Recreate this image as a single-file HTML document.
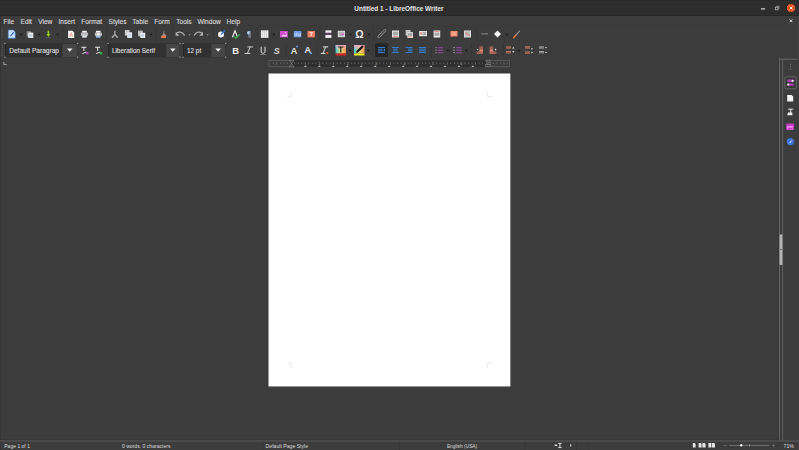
<!DOCTYPE html>
<html><head><meta charset="utf-8">
<style>
html,body{margin:0;padding:0;width:799px;height:450px;overflow:hidden;background:#3c3c3c;}
svg{display:block;position:absolute;left:0;top:0;}
text{font-family:"Liberation Sans",sans-serif;}
</style></head>
<body>
<svg width="799" height="450" viewBox="0 0 799 450">

<rect x="0" y="0" width="799" height="450" fill="#3c3c3c"/>
<rect x="0" y="16" width="1" height="434" fill="#353535"/>
<rect x="798" y="16" width="1" height="434" fill="#444444"/>
<rect x="0" y="0" width="799" height="16" fill="#2d2d2d"/>
<rect x="0" y="0" width="799" height="1" fill="#292929"/>
<rect x="0" y="15" width="799" height="1" fill="#272727"/>
<text x="354.3" y="10.7" font-size="7.5" font-weight="bold" fill="#e8e8e8" textLength="89.3" lengthAdjust="spacingAndGlyphs">Untitled 1 - LibreOffice Writer</text>
<rect x="761" y="8.1" width="4.1" height="1.5" fill="#b4b4b4"/>
<circle cx="791" cy="8" r="4.1" fill="#e95420"/>
<path d="M789.4 6.4 L792.6 9.6 M792.6 6.4 L789.4 9.6" stroke="#fff" stroke-width="0.9"/>
<rect x="775.3" y="7.2" width="2.7" height="2.6" fill="none" stroke="#bdbdbd" stroke-width="0.75"/>
<path d="M776.3 6.2 H779 V8.9" fill="none" stroke="#bdbdbd" stroke-width="0.6"/>
<path d="M789.6 19.4 L792.4 22.2 M792.4 19.4 L789.6 22.2" stroke="#dcdcdc" stroke-width="1"/>
<rect x="0" y="25.5" width="784" height="0.6" fill="#393939"/>
<g font-size="6.6" fill="#dcdcdc" stroke="#dcdcdc" stroke-width="0.1">
<text x="3.6" y="24.2">File</text>
<text x="20.6" y="24.2">Edit</text>
<text x="38.2" y="24.2">View</text>
<text x="58.5" y="24.2">Insert</text>
<text x="81.3" y="24.2">Format</text>
<text x="108.6" y="24.2">Styles</text>
<text x="132.3" y="24.2">Table</text>
<text x="154.3" y="24.2">Form</text>
<text x="176.2" y="24.2">Tools</text>
<text x="197.4" y="24.2">Window</text>
<text x="226.6" y="24.2">Help</text>
</g>
<rect x="1.6" y="29.2" width="1.2" height="0.8" fill="#5e5e5e"/>
<rect x="1.6" y="31.2" width="1.2" height="0.8" fill="#5e5e5e"/>
<rect x="1.6" y="33.2" width="1.2" height="0.8" fill="#5e5e5e"/>
<rect x="1.6" y="35.2" width="1.2" height="0.8" fill="#5e5e5e"/>
<rect x="1.6" y="37.2" width="1.2" height="0.8" fill="#5e5e5e"/>
<path d="M8.3 30 H13.3 L15.2 32 V38.2 H8.3 Z" fill="#cfe0f6" stroke="#3d86de" stroke-width="0.6"/>
<path d="M10.4 36.2 L13.8 32.2" stroke="#2566c0" stroke-width="1.1"/>
<path d="M19.5 33.800000000000004 H22.5 L21 35.5 Z" fill="#151515"/>
<rect x="26.6" y="31.2" width="4.5" height="5.5" fill="#8c8c8c"/>
<rect x="28.3" y="32.6" width="5" height="5.3" fill="#f0f0f0"/>
<rect x="29.2" y="34.3" width="3.2" height="2" fill="#b8c8e0"/>
<path d="M37.8 33.800000000000004 H40.8 L39.3 35.5 Z" fill="#151515"/>
<path d="M47.6 30.8 H49.2 V34 H50.3 L48.4 37 L46.5 34 H47.6 Z" fill="#98cf22"/>
<rect x="46" y="37.3" width="4.6" height="0.6" fill="#6a6a6a"/>
<path d="M55.9 33.800000000000004 H58.9 L57.4 35.5 Z" fill="#151515"/>
<rect x="62.5" y="27" width="0.8" height="15" fill="#353535"/>
<path d="M68.1 30.8 H72.4 L74.2 32.6 V38.1 H68.1 Z" fill="#f4f4f4"/>
<path d="M69.6 36.8 L71.2 32.6 L72.8 36.8 M70.1 35.4 H72.3" fill="none" stroke="#f0604c" stroke-width="0.45"/>
<rect x="82.2" y="30.8" width="4.6" height="2" fill="#f4f4f4"/>
<rect x="80.9" y="32.6" width="7.2" height="3.4" rx="1" fill="#b9b9b9"/>
<rect x="82.2" y="35.6" width="4.6" height="2" fill="#dde6f4"/>
<rect x="96" y="30.8" width="4.6" height="2" fill="#f4f4f4"/>
<rect x="94.8" y="32.6" width="7.2" height="3.4" rx="1" fill="#b9b9b9"/>
<rect x="96" y="35.6" width="4.6" height="2" fill="#9ec3ef"/>
<circle cx="98.3" cy="34.2" r="1.4" fill="#eeeeee"/>
<rect x="106" y="27" width="0.8" height="15" fill="#353535"/>
<path d="M114.9 30.8 V34.6 M114.9 34.6 L112.6 37 M114.9 34.6 L117.2 37" stroke="#a6a6a6" stroke-width="1.4" fill="none"/>
<circle cx="112.6" cy="37" r="0.9" fill="#a6a6a6"/><circle cx="117.2" cy="37" r="0.9" fill="#a6a6a6"/>
<rect x="124.9" y="30" width="4.6" height="5.6" fill="#c9c9c9"/>
<rect x="127.2" y="32.3" width="4.8" height="5.6" fill="#ececf4"/>
<rect x="128.2" y="33.8" width="2.8" height="2.4" fill="#c8d4ea"/>
<rect x="138" y="30.6" width="4.8" height="5.6" fill="#bdbdbd"/>
<rect x="140.3" y="32.8" width="4.9" height="5.1" fill="#f2f2f2"/>
<rect x="141.3" y="34.2" width="2.6" height="2.2" fill="#b7c7e4"/>
<path d="M149.7 33.800000000000004 H152.7 L151.2 35.5 Z" fill="#151515"/>
<rect x="155.7" y="27" width="0.8" height="15" fill="#353535"/>
<path d="M163.5 30.8 H164.3 V33.2 L166.2 35.6 L165.8 37.9 H161 L161.2 36.6 L163.5 33.2 Z" fill="#8e8e8e"/>
<path d="M161.9 35.4 H166.1 L165.8 37.9 H161 Z" fill="#f07a4a"/>
<rect x="172.6" y="27" width="0.8" height="15" fill="#353535"/>
<path d="M176.2 33.6 C178 31.4 182.6 31.4 184.6 35.6" stroke="#b0b0b0" stroke-width="1.2" fill="none"/>
<path d="M175.6 31.8 V35.8 H179.4 Z" fill="#b0b0b0"/>
<path d="M188.5 34.0 H190.7 L189.6 35.699999999999996 Z" fill="#8a8a8a"/>
<path d="M202.4 33.6 C200.6 31.4 196 31.4 194 35.6" stroke="#b0b0b0" stroke-width="1.2" fill="none"/>
<path d="M203 31.8 V35.8 H199.2 Z" fill="#b0b0b0"/>
<path d="M206.5 34.0 H208.7 L207.6 35.699999999999996 Z" fill="#8a8a8a"/>
<rect x="213" y="27" width="0.8" height="15" fill="#353535"/>
<circle cx="221" cy="34.5" r="3" fill="#f2f2f2"/>
<path d="M221 34.5 L225 30.4" stroke="#2f7ae0" stroke-width="1.3"/>
<path d="M223.2 36.8 L224.6 38" stroke="#777" stroke-width="0.6"/>
<path d="M232.4 37.2 L235 30.8 L237.6 37.2" stroke="#ececec" stroke-width="1.2" fill="none"/>
<path d="M234 36.2 L235.9 38.3 L239.9 34.3" stroke="#3aa050" stroke-width="1.3" fill="none"/>
<path d="M250.2 31.2 V37.9 M249 31.2 V37.9" stroke="#b4cce8" stroke-width="0.6"/>
<path d="M250.2 31.2 H248.4 C246.6 31.2 246.6 34.4 248.4 34.4 H249 Z" fill="#b4cce8"/>
<rect x="257.1" y="27" width="0.8" height="15" fill="#353535"/>
<rect x="260.9" y="30.4" width="7.5" height="7.5" fill="#efefef"/>
<path d="M262.8 30.4 V37.9 M264.6 30.4 V37.9 M266.5 30.4 V37.9" stroke="#b4b4b4" stroke-width="0.5"/>
<path d="M272.2 33.800000000000004 H275.2 L273.7 35.5 Z" fill="#151515"/>
<rect x="280" y="31" width="7.8" height="6.3" fill="#cf4fcf"/>
<path d="M281 36.6 L283.4 34.4 L285 35.6 L286.8 34 V36.6 Z" fill="#f4c8f4"/>
<circle cx="285.6" cy="32.6" r="0.7" fill="#f8e0f8"/>
<rect x="293.8" y="31" width="7.5" height="6.3" fill="#6f9be8"/>
<path d="M295 36.2 V33.4 M296.8 36.2 V32.6 M298.6 36.2 V34 M300.2 36.2 V33" stroke="#dde8fa" stroke-width="0.8"/>
<rect x="307.5" y="31" width="7.5" height="6.3" fill="#f07f63"/>
<path d="M309.4 32.6 H313.1 M311.25 32.6 V36" stroke="#fbe3dc" stroke-width="0.9"/>
<rect x="319.4" y="27" width="0.8" height="15" fill="#353535"/>
<rect x="325.4" y="30.4" width="6" height="2.3" fill="#f2f2f2"/>
<path d="M325.4 33.7 H331.4" stroke="#d646d6" stroke-width="0.7" stroke-dasharray="1 0.5"/>
<rect x="325.4" y="35" width="6" height="2.9" fill="#f2f2f2"/>
<rect x="337.8" y="30.8" width="7.1" height="6.4" fill="#e6e6e6"/>
<rect x="338.6" y="31.6" width="5.5" height="4.8" fill="#b4b4b4"/>
<rect x="341.4" y="33.6" width="2.2" height="1.2" fill="#e040e0"/>
<path d="M349.1 33.800000000000004 H352.1 L350.6 35.5 Z" fill="#151515"/>
<text x="355.3" y="37.9" font-size="10" font-weight="bold" fill="#e6e6e6" textLength="8.4" lengthAdjust="spacingAndGlyphs">Ω</text>
<path d="M367.5 33.800000000000004 H370.5 L369 35.5 Z" fill="#151515"/>
<rect x="373.1" y="27" width="0.8" height="15" fill="#353535"/>
<path d="M378.8 36.6 L381.6 33.8 M382.2 33.2 L385 30.4" stroke="#8e8e8e" stroke-width="2.7" stroke-linecap="round"/>
<path d="M378.8 36.6 L381.6 33.8 M382.2 33.2 L385 30.4" stroke="#3c3c3c" stroke-width="1.2" stroke-linecap="round"/>
<rect x="392" y="30.5" width="7" height="7" fill="#ececec"/>
<rect x="392.8" y="31.6" width="5.4" height="3.8" fill="#a8a8a8"/>
<rect x="392.8" y="36" width="5.4" height="0.6" fill="#e8574a"/>
<rect x="405.6" y="30" width="5" height="5.6" fill="#bdbdbd"/>
<rect x="407.4" y="32.2" width="5.6" height="5.8" fill="#ececec"/>
<rect x="408" y="33" width="4.4" height="3" fill="#a8a8a8"/>
<rect x="408" y="36.6" width="4.4" height="0.6" fill="#e8574a"/>
<rect x="419.2" y="31" width="7.8" height="5.2" fill="#ececec"/>
<rect x="422.6" y="31.8" width="3.6" height="3.6" fill="#a8a8a8"/>
<rect x="420.6" y="32" width="0.9" height="3" fill="#e8453c"/>
<rect x="433.6" y="30.5" width="6.6" height="7" fill="#ececec"/>
<rect x="434.4" y="32.6" width="5" height="3.2" fill="#a8a8a8"/>
<rect x="434.4" y="31.3" width="5" height="0.6" fill="#e8574a"/>
<rect x="446" y="27" width="0.8" height="15" fill="#353535"/>
<path d="M450.5 31 H457.5 V36.5 H452.6 L451.6 37.6 V36.5 H450.5 Z" fill="#f28a6e"/>
<path d="M451.6 33 H456.4 M451.6 34.6 H456.4" stroke="#fbd8cc" stroke-width="0.5"/>
<rect x="464" y="30.5" width="7" height="7" fill="#e4e4e4"/>
<rect x="464.8" y="31.3" width="5.4" height="5.4" fill="#bcbcbc"/>
<path d="M465.4 32.6 L469.6 35.6" stroke="#e8574a" stroke-width="0.8"/>
<rect x="476" y="27" width="0.8" height="15" fill="#353535"/>
<rect x="481" y="33.2" width="7" height="1.3" fill="#7a7a7a"/>
<path d="M497.5 30.5 L501 34 L497.5 37.5 L494 34 Z" fill="#f6f6f6"/>
<path d="M505.3 33.7 H508.3 L506.8 35.4 Z" fill="#151515"/>
<path d="M519.6 31 L515.4 35.6" stroke="#a0a0a0" stroke-width="1.1" stroke-linecap="round"/>
<path d="M515.6 35.3 L513.8 37.6" stroke="#f07a3c" stroke-width="1.5" stroke-linecap="round"/>
<rect x="1.6" y="45" width="1.2" height="0.8" fill="#5e5e5e"/>
<rect x="1.6" y="47" width="1.2" height="0.8" fill="#5e5e5e"/>
<rect x="1.6" y="49" width="1.2" height="0.8" fill="#5e5e5e"/>
<rect x="1.6" y="51" width="1.2" height="0.8" fill="#5e5e5e"/>
<rect x="1.6" y="53" width="1.2" height="0.8" fill="#5e5e5e"/>
<rect x="1.6" y="55" width="1.2" height="0.8" fill="#5e5e5e"/>
<rect x="5" y="43.2" width="72.5" height="14.2" fill="#313131"/>
<rect x="5" y="43.6" width="0.8" height="13.6" fill="#262626"/>
<rect x="62.6" y="43.9" width="14.299999999999999" height="13.1" fill="#464646"/>
<rect x="4.4" y="42.9" width="1.2" height="1.2" fill="#a0a0a0"/>
<rect x="4.4" y="56.6" width="1.2" height="1.2" fill="#a0a0a0"/>
<rect x="76.9" y="42.9" width="1.2" height="1.2" fill="#a0a0a0"/>
<rect x="76.9" y="56.6" width="1.2" height="1.2" fill="#a0a0a0"/>
<path d="M67.05 48.6 H72.45 L69.75 51.7 Z" fill="#f2f2f2"/>
<svg x="5" y="43" width="54" height="15" overflow="hidden"><text x="4.199999999999999" y="10" font-size="6.6" fill="#e0e0e0" stroke="#e0e0e0" stroke-width="0.08">Default Paragraph Style</text></svg>
<path d="M81.4 47.3 H86.4 M83.9 47.3 V50.8" stroke="#e8e8e8" stroke-width="1.05"/>
<path d="M82.3 53.6 L86.4 52" stroke="#e8e8e8" stroke-width="0.9"/>
<circle cx="87.2" cy="53.3" r="1.3" fill="#b444b4"/>
<path d="M95.1 47.3 H100.1 M97.6 47.3 V50.8" stroke="#e8e8e8" stroke-width="1.05"/>
<path d="M96 53.6 L100.1 52" stroke="#e8e8e8" stroke-width="0.9"/>
<circle cx="101" cy="53.3" r="1.3" fill="#40b050"/>
<rect x="108.2" y="43.2" width="71.8" height="14.2" fill="#313131"/>
<rect x="108.2" y="43.6" width="0.8" height="13.6" fill="#262626"/>
<rect x="166.3" y="43.9" width="13.099999999999989" height="13.1" fill="#464646"/>
<rect x="107.60000000000001" y="42.9" width="1.2" height="1.2" fill="#a0a0a0"/>
<rect x="107.60000000000001" y="56.6" width="1.2" height="1.2" fill="#a0a0a0"/>
<rect x="179.4" y="42.9" width="1.2" height="1.2" fill="#a0a0a0"/>
<rect x="179.4" y="56.6" width="1.2" height="1.2" fill="#a0a0a0"/>
<path d="M170.15 48.6 H175.54999999999998 L172.85 51.7 Z" fill="#f2f2f2"/>
<svg x="108.2" y="43" width="56.60000000000001" height="15" overflow="hidden"><text x="3.700000000000003" y="10" font-size="6.6" fill="#e0e0e0" stroke="#e0e0e0" stroke-width="0.08" textLength="43.1" lengthAdjust="spacingAndGlyphs">Liberation Serif</text></svg>
<rect x="183.1" y="43.2" width="42.5" height="14.2" fill="#313131"/>
<rect x="183.1" y="43.6" width="0.8" height="13.6" fill="#262626"/>
<rect x="211.3" y="43.9" width="13.699999999999983" height="13.1" fill="#464646"/>
<rect x="182.5" y="42.9" width="1.2" height="1.2" fill="#a0a0a0"/>
<rect x="182.5" y="56.6" width="1.2" height="1.2" fill="#a0a0a0"/>
<rect x="225.0" y="42.9" width="1.2" height="1.2" fill="#a0a0a0"/>
<rect x="225.0" y="56.6" width="1.2" height="1.2" fill="#a0a0a0"/>
<path d="M215.45 48.6 H220.84999999999997 L218.14999999999998 51.7 Z" fill="#f2f2f2"/>
<svg x="183.1" y="43" width="26.700000000000017" height="15" overflow="hidden"><text x="3.8000000000000114" y="10" font-size="6.6" fill="#e0e0e0" stroke="#e0e0e0" stroke-width="0.08" textLength="14.3" lengthAdjust="spacingAndGlyphs">12 pt</text></svg>
<text x="232.3" y="53.6" font-size="9.4" font-weight="bold" fill="#ececec">B</text>
<path d="M247.4 46.9 H253.1 M244.6 53.5 H250.4 M250.2 46.9 L247.4 53.5" stroke="#dcdcdc" stroke-width="0.9" fill="none"/>
<path d="M261.2 46.8 V51.6 C261.2 53.8 265 53.8 265 51.6 V46.8" stroke="#e6e6e6" stroke-width="1" fill="none"/>
<rect x="260" y="54.2" width="6" height="0.6" fill="#a0a0a0"/>
<text x="273.8" y="53.5" font-size="9" font-weight="bold" font-style="italic" fill="#d6d6d6">S</text>
<rect x="285.9" y="44" width="0.8" height="13" fill="#353535"/>
<text x="290.8" y="53.5" font-size="9" font-weight="bold" fill="#e8e8e8">A</text>
<circle cx="297" cy="46.6" r="1" fill="#5a9ee8"/>
<text x="304.4" y="53.2" font-size="9" font-weight="bold" fill="#e8e8e8">A</text>
<circle cx="311" cy="53.2" r="1" fill="#5a9ee8"/>
<rect x="316" y="44" width="0.8" height="13" fill="#353535"/>
<path d="M322.8 46.9 H328.2 M320.8 53.4 H325.4 M325.6 46.9 L323 53.4" stroke="#e0e0e0" stroke-width="1" fill="none"/>
<circle cx="327.3" cy="53.1" r="1.1" fill="#f0582a"/>
<rect x="333.3" y="44" width="0.8" height="13" fill="#353535"/>
<defs><linearGradient id="rg" x1="0" y1="0" x2="1" y2="0"><stop offset="0" stop-color="#40c8d8"/><stop offset="0.5" stop-color="#e8e070"/><stop offset="1" stop-color="#f89050"/></linearGradient><linearGradient id="pk" x1="0" y1="0" x2="0" y2="1"><stop offset="0" stop-color="#f8a0d0" stop-opacity="0.9"/><stop offset="0.6" stop-color="#f8a0d0" stop-opacity="0"/></linearGradient></defs>
<rect x="335.6" y="45" width="10.4" height="8.5" fill="url(#rg)"/>
<rect x="335.6" y="45" width="10.4" height="8.5" fill="url(#pk)"/>
<path d="M338.2 47 H343.4 M340.8 47 V52.6" stroke="#1a1a1a" stroke-width="1.2"/>
<rect x="335.6" y="53.5" width="10.4" height="2" fill="#e02020"/>
<path d="M348.7 49.800000000000004 H351.7 L350.2 51.5 Z" fill="#151515"/>
<rect x="354" y="45" width="10.5" height="8.5" fill="url(#rg)"/>
<rect x="354" y="45" width="10.5" height="8.5" fill="url(#pk)"/>
<path d="M357.2 51.8 L362.4 46.6" stroke="#1a1a1a" stroke-width="2.2" stroke-linecap="round"/>
<rect x="354" y="53.5" width="10.5" height="2" fill="#f0f020"/>
<path d="M366.8 49.800000000000004 H369.8 L368.3 51.5 Z" fill="#151515"/>
<rect x="372.6" y="44" width="0.8" height="13" fill="#353535"/>
<rect x="375" y="43.2" width="13" height="13.8" rx="1.2" fill="#262626"/>
<rect x="378" y="47" width="7" height="0.95" fill="#3482d4"/>
<rect x="378" y="48.7" width="4.6" height="0.95" fill="#3482d4"/>
<rect x="378" y="50.4" width="4.6" height="0.95" fill="#3482d4"/>
<rect x="378" y="52.1" width="7" height="0.95" fill="#3482d4"/>
<path d="M385 48.6 L383.2 50 L385 51.4" fill="#3482d4"/>
<rect x="392" y="47" width="7" height="0.95" fill="#3482d4"/>
<rect x="393.2" y="48.7" width="4.6" height="0.95" fill="#3482d4"/>
<rect x="393.2" y="50.4" width="4.6" height="0.95" fill="#3482d4"/>
<rect x="392" y="52.1" width="7" height="0.95" fill="#3482d4"/>
<rect x="405.5" y="47" width="7" height="0.95" fill="#3482d4"/>
<rect x="407.9" y="48.7" width="4.6" height="0.95" fill="#3482d4"/>
<rect x="407.9" y="50.4" width="4.6" height="0.95" fill="#3482d4"/>
<rect x="405.5" y="52.1" width="7" height="0.95" fill="#3482d4"/>
<rect x="419" y="47" width="7" height="0.95" fill="#3482d4"/>
<rect x="419" y="48.7" width="7" height="0.95" fill="#3482d4"/>
<rect x="419" y="50.4" width="7" height="0.95" fill="#3482d4"/>
<rect x="419" y="52.1" width="7" height="0.95" fill="#3482d4"/>
<rect x="430.8" y="44" width="0.8" height="13" fill="#353535"/>
<rect x="435.4" y="47.2" width="1.2" height="0.9" fill="#a8a8a8"/>
<rect x="437.8" y="47.2" width="5.4" height="1.1" fill="#8e4a9e"/>
<rect x="435.4" y="49.7" width="1.2" height="0.9" fill="#a8a8a8"/>
<rect x="437.8" y="49.7" width="5.4" height="1.1" fill="#8e4a9e"/>
<rect x="435.4" y="52.2" width="1.2" height="0.9" fill="#a8a8a8"/>
<rect x="437.8" y="52.2" width="5.4" height="1.1" fill="#8e4a9e"/>
<path d="M446.3 49.800000000000004 H449.3 L447.8 51.5 Z" fill="#151515"/>
<rect x="453.3" y="47.2" width="1.6" height="0.9" fill="#a8a8a8"/>
<rect x="456.2" y="47.2" width="5.8" height="1.1" fill="#8e4a9e"/>
<rect x="453.3" y="49.7" width="1.6" height="0.9" fill="#a8a8a8"/>
<rect x="456.2" y="49.7" width="5.8" height="1.1" fill="#8e4a9e"/>
<rect x="453.3" y="52.2" width="1.6" height="0.9" fill="#a8a8a8"/>
<rect x="456.2" y="52.2" width="5.8" height="1.1" fill="#8e4a9e"/>
<path d="M464.8 49.800000000000004 H467.8 L466.3 51.5 Z" fill="#151515"/>
<rect x="471.2" y="44" width="0.8" height="13" fill="#353535"/>
<defs><pattern id="st" width="4" height="1.25" patternUnits="userSpaceOnUse" y="0.2"><rect width="4" height="0.8" fill="#e08670"/><rect y="0.8" width="4" height="0.45" fill="#9a5a4c"/></pattern><pattern id="stg" width="4" height="1.25" patternUnits="userSpaceOnUse" y="0.2"><rect width="4" height="0.8" fill="#c4c4c4"/><rect y="0.8" width="4" height="0.45" fill="#7a7a7a"/></pattern></defs>
<rect x="479.4" y="46.5" width="3.6" height="7.5" fill="url(#st)"/>
<rect x="476.6" y="51.6" width="6.4" height="2.4" fill="url(#st)"/>
<path d="M476.6 49.6 L478.2 48.6 V50.6 Z" fill="#f0f0f0"/>
<rect x="489.6" y="46.5" width="3.6" height="7.5" fill="url(#st)"/>
<rect x="489.6" y="51.6" width="6.8" height="2.4" fill="url(#st)"/>
<path d="M496.6 49.6 L495 48.6 V50.6 Z" fill="#f0f0f0"/>
<rect x="503" y="44" width="0.8" height="13" fill="#353535"/>
<rect x="506" y="46.4" width="5" height="2.4" fill="url(#st)"/>
<rect x="506" y="51" width="5" height="2.6" fill="url(#st)"/>
<path d="M512 48.6 L513.3 47 L514.6 48.6 Z M512 51.2 L513.3 52.8 L514.6 51.2 Z" fill="#e8e8e8"/>
<path d="M517.3 50.2 H520.3 L518.8 51.9 Z" fill="#151515"/>
<rect x="525" y="46.2" width="5" height="2.6" fill="url(#st)"/>
<rect x="525" y="51.4" width="5" height="2.6" fill="url(#st)"/>
<path d="M531.4 47.8 L533 48.8 L531.4 49.8 Z M531.4 51.6 L533 52.6 L531.4 53.6 Z" fill="#e8e8e8"/>
<rect x="539" y="46.4" width="5" height="2.4" fill="url(#stg)"/>
<rect x="539" y="51" width="5" height="2.4" fill="url(#stg)"/>
<path d="M545 47 H547 L546 48.6 Z M545 53 H547 L546 51.4 Z" fill="#e0e0e0"/>
<rect x="268.6" y="60.2" width="241" height="6.8" fill="#2f2f2f"/>
<rect x="269" y="60.5" width="22.6" height="6.3" fill="#3c3c3c" stroke="#6e6e6e" stroke-width="0.6"/>
<rect x="487.4" y="60.5" width="22" height="6.3" fill="#3c3c3c" stroke="#6e6e6e" stroke-width="0.6"/>
<rect x="272.95" y="62.6" width="0.6" height="1.5" fill="#7a7a7a"/>
<rect x="276.5" y="62.2" width="0.6" height="2.4" fill="#8a8a8a"/>
<rect x="280.05" y="62.6" width="0.6" height="1.5" fill="#7a7a7a"/>
<rect x="283.59999999999997" y="62.6" width="0.6" height="1.5" fill="#7a7a7a"/>
<rect x="287.15" y="62.6" width="0.6" height="1.5" fill="#7a7a7a"/>
<rect x="294.25" y="62.6" width="0.6" height="1.5" fill="#7a7a7a"/>
<rect x="297.8" y="62.6" width="0.6" height="1.5" fill="#7a7a7a"/>
<rect x="301.34999999999997" y="62.6" width="0.6" height="1.5" fill="#7a7a7a"/>
<rect x="304.9" y="62.2" width="0.6" height="2.4" fill="#8a8a8a"/>
<rect x="308.45" y="62.6" width="0.6" height="1.5" fill="#7a7a7a"/>
<rect x="312.0" y="62.6" width="0.6" height="1.5" fill="#7a7a7a"/>
<rect x="315.55" y="62.6" width="0.6" height="1.5" fill="#7a7a7a"/>
<rect x="322.65" y="62.6" width="0.6" height="1.5" fill="#7a7a7a"/>
<rect x="326.2" y="62.6" width="0.6" height="1.5" fill="#7a7a7a"/>
<rect x="329.75" y="62.6" width="0.6" height="1.5" fill="#7a7a7a"/>
<rect x="333.3" y="62.2" width="0.6" height="2.4" fill="#8a8a8a"/>
<rect x="336.84999999999997" y="62.6" width="0.6" height="1.5" fill="#7a7a7a"/>
<rect x="340.4" y="62.6" width="0.6" height="1.5" fill="#7a7a7a"/>
<rect x="343.95" y="62.6" width="0.6" height="1.5" fill="#7a7a7a"/>
<rect x="351.05" y="62.6" width="0.6" height="1.5" fill="#7a7a7a"/>
<rect x="354.59999999999997" y="62.6" width="0.6" height="1.5" fill="#7a7a7a"/>
<rect x="358.15" y="62.6" width="0.6" height="1.5" fill="#7a7a7a"/>
<rect x="361.7" y="62.2" width="0.6" height="2.4" fill="#8a8a8a"/>
<rect x="365.25" y="62.6" width="0.6" height="1.5" fill="#7a7a7a"/>
<rect x="368.8" y="62.6" width="0.6" height="1.5" fill="#7a7a7a"/>
<rect x="372.34999999999997" y="62.6" width="0.6" height="1.5" fill="#7a7a7a"/>
<rect x="379.45" y="62.6" width="0.6" height="1.5" fill="#7a7a7a"/>
<rect x="383.0" y="62.6" width="0.6" height="1.5" fill="#7a7a7a"/>
<rect x="386.55" y="62.6" width="0.6" height="1.5" fill="#7a7a7a"/>
<rect x="390.09999999999997" y="62.2" width="0.6" height="2.4" fill="#8a8a8a"/>
<rect x="393.65" y="62.6" width="0.6" height="1.5" fill="#7a7a7a"/>
<rect x="397.2" y="62.6" width="0.6" height="1.5" fill="#7a7a7a"/>
<rect x="400.75" y="62.6" width="0.6" height="1.5" fill="#7a7a7a"/>
<rect x="407.84999999999997" y="62.6" width="0.6" height="1.5" fill="#7a7a7a"/>
<rect x="411.4" y="62.6" width="0.6" height="1.5" fill="#7a7a7a"/>
<rect x="414.95" y="62.6" width="0.6" height="1.5" fill="#7a7a7a"/>
<rect x="418.5" y="62.2" width="0.6" height="2.4" fill="#8a8a8a"/>
<rect x="422.05" y="62.6" width="0.6" height="1.5" fill="#7a7a7a"/>
<rect x="425.59999999999997" y="62.6" width="0.6" height="1.5" fill="#7a7a7a"/>
<rect x="429.15" y="62.6" width="0.6" height="1.5" fill="#7a7a7a"/>
<rect x="436.24999999999994" y="62.6" width="0.6" height="1.5" fill="#7a7a7a"/>
<rect x="439.8" y="62.6" width="0.6" height="1.5" fill="#7a7a7a"/>
<rect x="443.34999999999997" y="62.6" width="0.6" height="1.5" fill="#7a7a7a"/>
<rect x="446.9" y="62.2" width="0.6" height="2.4" fill="#8a8a8a"/>
<rect x="450.45" y="62.6" width="0.6" height="1.5" fill="#7a7a7a"/>
<rect x="453.99999999999994" y="62.6" width="0.6" height="1.5" fill="#7a7a7a"/>
<rect x="457.55" y="62.6" width="0.6" height="1.5" fill="#7a7a7a"/>
<rect x="464.65" y="62.6" width="0.6" height="1.5" fill="#7a7a7a"/>
<rect x="468.2" y="62.6" width="0.6" height="1.5" fill="#7a7a7a"/>
<rect x="471.74999999999994" y="62.6" width="0.6" height="1.5" fill="#7a7a7a"/>
<rect x="475.3" y="62.2" width="0.6" height="2.4" fill="#8a8a8a"/>
<rect x="478.84999999999997" y="62.6" width="0.6" height="1.5" fill="#7a7a7a"/>
<rect x="482.4" y="62.6" width="0.6" height="1.5" fill="#7a7a7a"/>
<rect x="485.95" y="62.6" width="0.6" height="1.5" fill="#7a7a7a"/>
<rect x="493.05" y="62.6" width="0.6" height="1.5" fill="#7a7a7a"/>
<rect x="496.59999999999997" y="62.6" width="0.6" height="1.5" fill="#7a7a7a"/>
<rect x="500.15" y="62.6" width="0.6" height="1.5" fill="#7a7a7a"/>
<rect x="503.7" y="62.2" width="0.6" height="2.4" fill="#8a8a8a"/>
<rect x="507.24999999999994" y="62.6" width="0.6" height="1.5" fill="#7a7a7a"/>
<text x="319.4" y="65" font-size="4" fill="#a0a0a0" text-anchor="middle">1</text>
<text x="347.8" y="65" font-size="4" fill="#a0a0a0" text-anchor="middle">2</text>
<text x="376.2" y="65" font-size="4" fill="#a0a0a0" text-anchor="middle">3</text>
<text x="404.6" y="65" font-size="4" fill="#a0a0a0" text-anchor="middle">4</text>
<text x="433.0" y="65" font-size="4" fill="#a0a0a0" text-anchor="middle">5</text>
<text x="461.4" y="65" font-size="4" fill="#a0a0a0" text-anchor="middle">6</text>
<text x="489.79999999999995" y="65" font-size="4" fill="#a0a0a0" text-anchor="middle">7</text>
<path d="M303.9 67 L305.4 65.2 L306.9 67 Z" fill="#b4b4b4"/>
<path d="M317.85999999999996 67 L319.35999999999996 65.2 L320.85999999999996 67 Z" fill="#b4b4b4"/>
<path d="M331.82 67 L333.32 65.2 L334.82 67 Z" fill="#b4b4b4"/>
<path d="M345.78 67 L347.28 65.2 L348.78 67 Z" fill="#b4b4b4"/>
<path d="M359.74 67 L361.24 65.2 L362.74 67 Z" fill="#b4b4b4"/>
<path d="M373.7 67 L375.2 65.2 L376.7 67 Z" fill="#b4b4b4"/>
<path d="M387.65999999999997 67 L389.15999999999997 65.2 L390.65999999999997 67 Z" fill="#b4b4b4"/>
<path d="M401.62 67 L403.12 65.2 L404.62 67 Z" fill="#b4b4b4"/>
<path d="M415.58 67 L417.08 65.2 L418.58 67 Z" fill="#b4b4b4"/>
<path d="M429.53999999999996 67 L431.03999999999996 65.2 L432.53999999999996 67 Z" fill="#b4b4b4"/>
<path d="M443.5 67 L445.0 65.2 L446.5 67 Z" fill="#b4b4b4"/>
<path d="M457.46 67 L458.96 65.2 L460.46 67 Z" fill="#b4b4b4"/>
<path d="M471.41999999999996 67 L472.91999999999996 65.2 L474.41999999999996 67 Z" fill="#b4b4b4"/>
<path d="M289.2 60.3 H294 L291.6 63.4 Z M289.2 66.8 H294 L291.6 63.6 Z" fill="#3c3c3c" stroke="#9a9a9a" stroke-width="0.5"/>
<path d="M485.6 60.3 H490.4 L488 63.4 Z" fill="#3c3c3c" stroke="#9a9a9a" stroke-width="0.5"/>
<rect x="485.8" y="64.6" width="4.4" height="2.2" fill="#3c3c3c" stroke="#9a9a9a" stroke-width="0.5"/>
<path d="M3.8 62 V64.6 H6.8" stroke="#a0a0a0" stroke-width="1" fill="none"/>
<rect x="268.5" y="73.5" width="242.8" height="313.9" fill="#464646"/>
<rect x="267" y="72" width="1.5" height="315" fill="#373737"/>
<rect x="267" y="72" width="243" height="1.5" fill="#373737"/>
<rect x="268.5" y="73.5" width="241.8" height="312.9" fill="#ffffff"/>
<path d="M287.5 96.6 H291.4 V92.3" stroke="#dedee6" stroke-width="0.7" fill="none"/>
<path d="M492 96.6 H487.4 V92.3" stroke="#dedee6" stroke-width="0.7" fill="none"/>
<path d="M287.5 363.4 H291.4 V367.8" stroke="#dedee6" stroke-width="0.7" fill="none"/>
<path d="M492 363.4 H487.4 V367.8" stroke="#dedee6" stroke-width="0.7" fill="none"/>
<rect x="779" y="58" width="20" height="383" fill="#3c3c3c"/>
<rect x="779" y="58.6" width="0.9" height="382.4" fill="#666666"/>
<rect x="782.2" y="58.6" width="0.9" height="382.4" fill="#666666"/>
<rect x="779" y="58.6" width="18.6" height="1.1" fill="#666666"/>
<rect x="779" y="440.4" width="20" height="0.9" fill="#666666"/>
<rect x="779.6" y="234.4" width="2.8" height="30.5" fill="#b4b4b4"/>
<circle cx="781" cy="249.4" r="0.7" fill="#555"/>
<rect x="790.1" y="63.8" width="0.9" height="0.9" fill="#8e8e8e"/>
<rect x="790.1" y="66.2" width="0.9" height="0.9" fill="#8e8e8e"/>
<rect x="790.1" y="68.6" width="0.9" height="0.9" fill="#8e8e8e"/>
<rect x="784.9" y="76.8" width="11.4" height="12" rx="1.4" fill="#383838" stroke="#7a7a7a" stroke-width="0.7"/>
<rect x="787" y="79.6" width="7" height="2.4" rx="1.2" fill="#b040b8"/>
<rect x="787" y="83.4" width="7" height="2.4" rx="1.2" fill="#b040b8"/>
<circle cx="792.6" cy="80.8" r="1.1" fill="#f4f4f4"/>
<circle cx="788.3" cy="84.6" r="1.1" fill="#f4f4f4"/>
<path d="M787.2 95 H791.6 L793.2 96.6 V101.4 H787.2 Z" fill="#f2f2f2"/>
<path d="M788.2 109.2 H793.2 M790.7 109.2 V113.4" stroke="#ececec" stroke-width="1"/>
<path d="M787.2 115.2 L788 112.6 H792.4 V115.2 Z" fill="#ececec"/>
<rect x="786.2" y="123.4" width="7.8" height="6.6" rx="0.6" fill="#c83cc8"/>
<rect x="787.2" y="126" width="5.8" height="3.2" fill="#f08cf0"/>
<path d="M787.6 129 L789.6 127.2 L791 128.2 L792.6 127 V129 Z" fill="#c83cc8"/>
<circle cx="790.4" cy="141.6" r="3.6" fill="#3c78e0"/>
<path d="M788.4 143.6 L792.6 139.6 L790.6 142.4 Z" fill="#f0f4ff"/>
<path d="M792.6 139.6 L791.6 140.4" stroke="#e04040" stroke-width="0.7"/>
<rect x="0" y="439.4" width="779" height="0.8" fill="#363636"/>
<rect x="0" y="440.1" width="799" height="1.7" fill="#4e4e4e"/>
<g font-size="5.1" fill="#dcdcdc">
<text x="4.25" y="447.5" textLength="25.7" lengthAdjust="spacingAndGlyphs">Page 1 of 1</text>
<text x="121.9" y="447.5" textLength="48.7" lengthAdjust="spacingAndGlyphs">0 words, 0 characters</text>
<text x="265.6" y="447.5" textLength="42.5" lengthAdjust="spacingAndGlyphs">Default Page Style</text>
<text x="446.9" y="447.5" textLength="30.3" lengthAdjust="spacingAndGlyphs">English (USA)</text>
<text x="783.6" y="447.5" textLength="10.4" lengthAdjust="spacingAndGlyphs">71%</text>
</g>
<rect x="262.5" y="442" width="0.6" height="8" fill="#353535"/>
<rect x="399" y="442" width="0.6" height="8" fill="#353535"/>
<rect x="525" y="442" width="0.6" height="8" fill="#353535"/>
<rect x="576" y="442" width="0.6" height="8" fill="#353535"/>
<rect x="588" y="442" width="0.6" height="8" fill="#353535"/>
<rect x="554.6" y="444.6" width="2.6" height="1.4" fill="#e6e6e6"/>
<path d="M558.2 443.4 H561.6 M559.9 443.4 V447.6 M558.2 447.6 H561.6" stroke="#e6e6e6" stroke-width="0.9"/>
<path d="M570.2 443.8 L571.8 445.4 L570.2 447 Z" fill="#d0d0d0"/>
<path d="M692.8 443 H694.6 L695.6 444 V447.4 H692.8 Z" fill="#e6e6e6"/>
<path d="M698.6 443 H700.6 L701.6 444 V447.4 H698.6 Z M702.4 443 H704.6 L705.6 444 V447.4 H702.4 Z" fill="#e6e6e6"/>
<path d="M708.4 443 H711.2 V447.4 H708.4 Z M711.8 443 H714.2 L715 444 V447.4 H711.8 Z" fill="#e6e6e6"/>
<rect x="723.4" y="445" width="3.4" height="0.6" fill="#7a7a7a"/>
<rect x="729.2" y="444.95" width="40.2" height="0.7" fill="#868686"/>
<circle cx="741.2" cy="445.3" r="1.2" fill="#f0f0f0"/>
<rect x="749" y="444.2" width="0.6" height="2.2" fill="#b0b0b0"/>
<path d="M772 445.3 H775.2 M773.6 443.7 V446.9" stroke="#7a7a7a" stroke-width="0.6"/>
</svg></body></html>
